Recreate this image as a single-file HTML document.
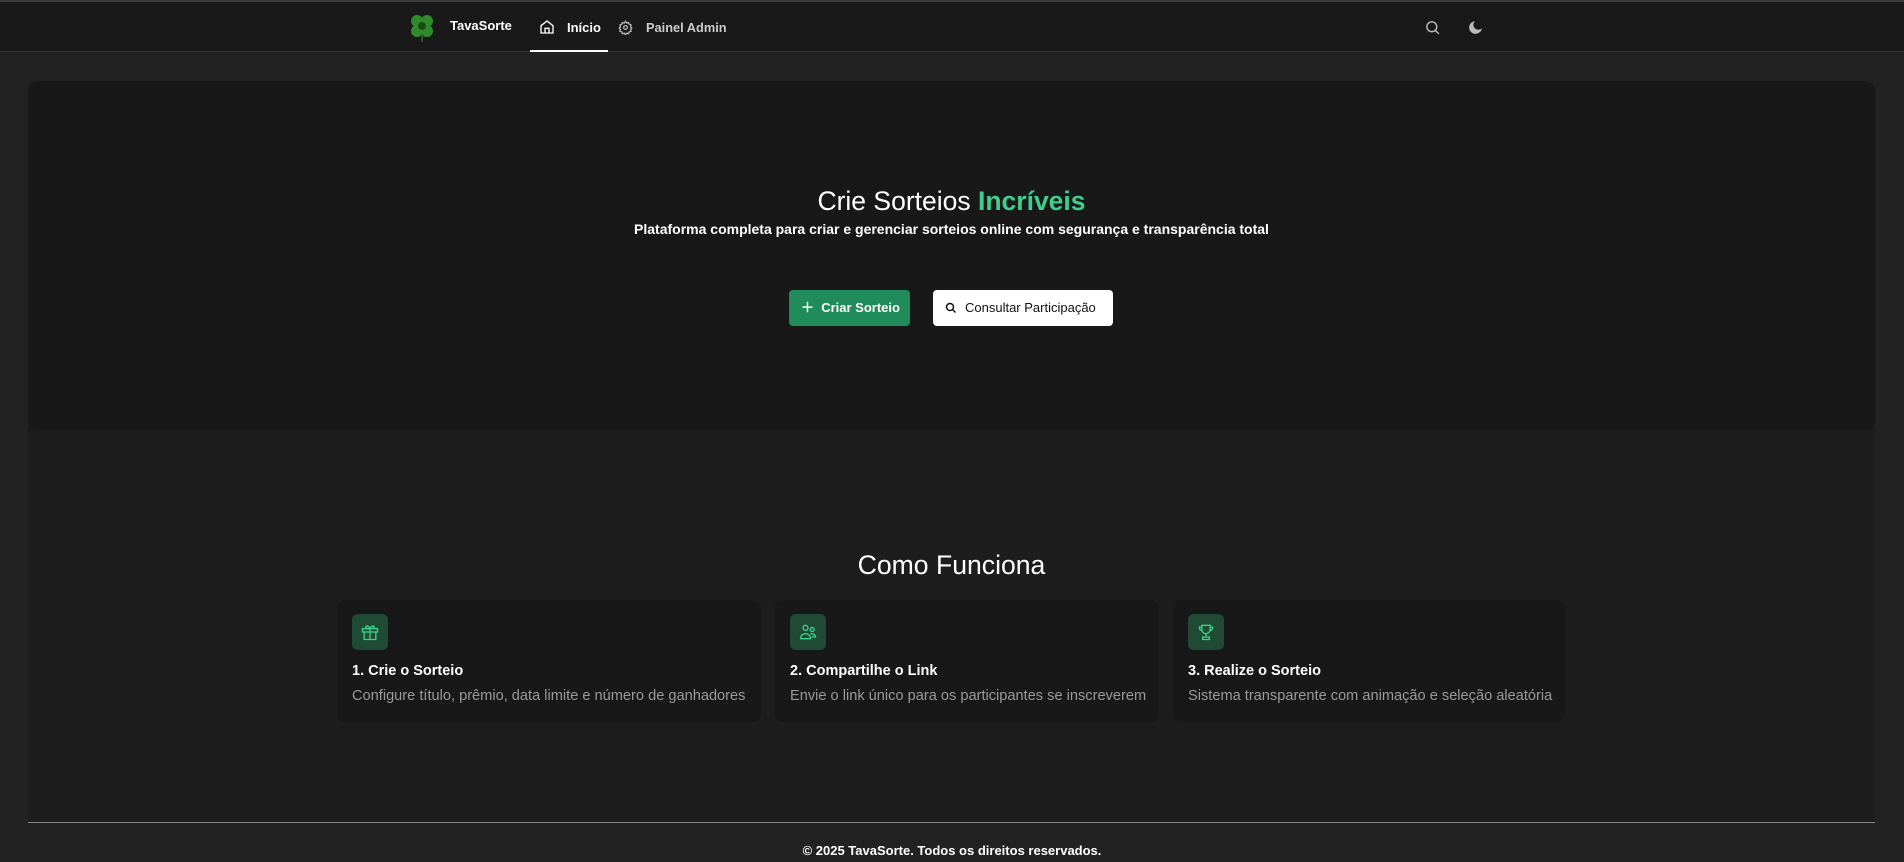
<!DOCTYPE html>
<html><head><meta charset="utf-8"><style>
*{box-sizing:border-box;margin:0;padding:0}
body{width:1904px;height:862px;background:#222;font-family:"Liberation Sans",sans-serif;color:#fff;position:relative;overflow:hidden}
.top{position:absolute;left:0;top:0;width:1904px;height:2px;background:#3a3a3a}
header{position:absolute;left:0;top:2px;width:1904px;height:50px;background:#191919;border-bottom:1px solid #2e2e2e}
.a{position:absolute}
main{position:absolute;left:28px;top:81px;width:1847px;height:742px;background:#1d1d1d;border-radius:10px 10px 0 0;border-bottom:1px solid #888;overflow:hidden}
.hero{position:absolute;left:0;top:0;width:1847px;height:349px;background:#181818;border-radius:10px 10px 10px 10px}
.card{position:absolute;top:600px;height:122px;background:#181818;border-radius:8px}
.ib{position:absolute;left:15px;top:14px;width:36px;height:36px;background:#1f4a33;border-radius:6px;display:flex;align-items:center;justify-content:center}
.ct{position:absolute;left:15px;top:63px;font-size:14.5px;font-weight:bold;white-space:nowrap}
.cd{position:absolute;left:15px;top:88px;font-size:14.6px;color:#9a9a9a;white-space:nowrap}
</style></head><body>
<div class="top"></div>
<header>
<svg class="a" style="left:408px;top:11px" width="28" height="30" viewBox="0 0 28 30"><g fill="#2f8a2a"><circle cx="9" cy="8" r="6"/><circle cx="19" cy="8" r="6"/><circle cx="9" cy="18" r="6"/><circle cx="19" cy="18" r="6"/></g><circle cx="14" cy="13" r="4" fill="#1a4a18"/><path d="M14 20 L14 29" stroke="#2f6a2a" stroke-width="1.5"/></svg>
<div class="a" style="left:450px;top:16px;font-size:13px;font-weight:bold">TavaSorte</div>
<svg class="a" style="left:539px;top:17px" width="16" height="16" viewBox="0 0 24 24" fill="none" stroke="#fff" stroke-width="2"><path d="M3 10l9-7 9 7v11H3z"/><path d="M9 21v-7h6v7"/></svg>
<div class="a" style="left:567px;top:18px;font-size:13px;font-weight:bold">Início</div>
<div class="a" style="left:530px;top:48px;width:78px;height:2px;background:#fff"></div>
<svg class="a" style="left:618px;top:18px" width="15" height="15" viewBox="0 0 24 24" fill="none" stroke="#bbb" stroke-width="2"><circle cx="12" cy="12" r="3"/><path d="M12 2l2 3 3-1 1 3 3 1-1 3 2 2-2 2 1 3-3 1-1 3-3-1-2 3-2-3-3 1-1-3-3-1 1-3-2-2 2-2-1-3 3-1 1-3 3 1z"/></svg>
<div class="a" style="left:646px;top:18px;font-size:12.8px;font-weight:bold;color:#ccc">Painel Admin</div>
<svg class="a" style="left:1424px;top:17px" width="17" height="17" viewBox="0 0 24 24" fill="none" stroke="#bbb" stroke-width="2"><circle cx="11" cy="11" r="7"/><path d="M16 16l5 5"/></svg>
<svg class="a" style="left:1467px;top:17px" width="17" height="17" viewBox="0 0 24 24" fill="#bbb"><path d="M21 13A9 9 0 1 1 11 3a7 7 0 0 0 10 10z"/></svg>
</header>
<main>
<div class="hero">
<div class="a" style="left:0;width:1847px;top:105px;text-align:center;font-size:26.5px">Crie Sorteios <span style="color:#3ecf8e;font-weight:bold">Incríveis</span></div>
<div class="a" style="left:0;width:1847px;top:140px;text-align:center;font-size:14px;font-weight:bold">Plataforma completa para criar e gerenciar sorteios online com segurança e transparência total</div>
<div class="a" style="left:761px;top:209px;width:121px;height:36px;background:#218c5b;border-radius:4px;font-size:13px;font-weight:bold;line-height:36px;padding-left:12px">＋&nbsp; Criar Sorteio</div>
<div class="a" style="left:905px;top:209px;width:180px;height:36px;background:#fff;border-radius:4px;color:#111;font-size:13px;line-height:36px;padding-left:32px">Consultar Participação
<svg class="a" style="left:12px;top:12px" width="12" height="12" viewBox="0 0 24 24" fill="none" stroke="#111" stroke-width="3"><circle cx="10" cy="10" r="7"/><path d="M15 15l6 6"/></svg></div>
</div>
<div class="a" style="left:0;width:1847px;top:469px;text-align:center;font-size:26.6px">Como Funciona</div>
</main>
<div class="card" style="left:337px;width:424px"><div class="ib"><svg width="20" height="20" viewBox="0 0 24 24" fill="none" stroke="#3ecf8e" stroke-width="1.6"><rect x="3" y="8" width="18" height="4"/><path d="M5 12v9h14v-9M12 8v13M12 8C10 4 7 4 7 6s3 2 5 2c2 0 5 0 5-2s-3-2-5 2"/></svg></div><div class="ct">1. Crie o Sorteio</div><div class="cd">Configure título, prêmio, data limite e número de ganhadores</div></div>
<div class="card" style="left:775px;width:384px"><div class="ib"><svg width="20" height="20" viewBox="0 0 24 24" fill="none" stroke="#3ecf8e" stroke-width="1.6"><circle cx="9" cy="7" r="3"/><circle cx="17" cy="9" r="2.3"/><path d="M3 20c0-4 3-6 6-6s6 2 6 6zM15 14c3 0 6 1 6 4h-5"/></svg></div><div class="ct">2. Compartilhe o Link</div><div class="cd">Envie o link único para os participantes se inscreverem</div></div>
<div class="card" style="left:1173px;width:392px"><div class="ib"><svg width="20" height="20" viewBox="0 0 24 24" fill="none" stroke="#3ecf8e" stroke-width="1.6"><path d="M7 4h10v5a5 5 0 0 1-10 0zM7 6H4c0 3 1 4 3 4M17 6h3c0 3-1 4-3 4M12 14v3M8 21h8v-3H8z"/></svg></div><div class="ct">3. Realize o Sorteio</div><div class="cd">Sistema transparente com animação e seleção aleatória</div></div>
<div class="a" style="left:0;width:1904px;top:843px;text-align:center;font-size:13px;font-weight:bold">© 2025 TavaSorte. Todos os direitos reservados.</div>
</body></html>
